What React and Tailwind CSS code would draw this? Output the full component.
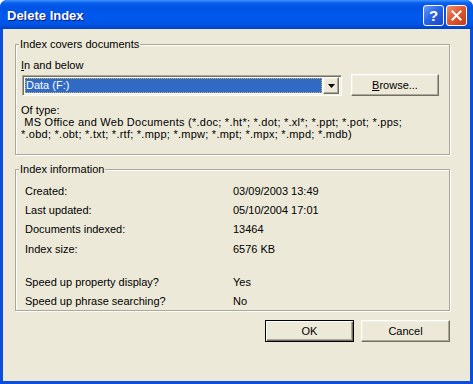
import React from 'react';

// classic etched frame used by both group boxes
const etched = 'border border-[#aca899] shadow-[inset_1px_1px_0_#fff,1px_1px_0_#fff]';
const raised = 'border border-t-white border-l-white border-b-[#716f64] border-r-[#716f64] shadow-[inset_-1px_-1px_0_#aca899,inset_1px_1px_0_#f1efe2]';

function GroupBox({ title, className, children }) {
  return (
    <div className={`relative ${etched} ${className}`}>
      <span className="absolute -top-[7px] left-[3px] bg-[#ece9d8] px-px leading-[13px]">{title}</span>
      {children}
    </div>
  );
}

function InfoRow({ label, value, className = '' }) {
  return (
    <div className={`flex leading-[13px] ${className}`}>
      <span className="w-[208px]">{label}</span>
      <span>{value}</span>
    </div>
  );
}

function TitleButton({ kind }) {
  if (kind === 'help') {
    return (
      <div className="w-[21px] h-[21px] rounded-[3px] border border-white bg-[linear-gradient(135deg,#6f9cf8_0%,#2b64e6_45%,#1747c9_100%)] flex items-center justify-center">
        <span className="text-white font-bold text-[15px] leading-none font-['Liberation_Sans',sans-serif]">?</span>
      </div>
    );
  }
  return (
    <div className="w-[21px] h-[21px] rounded-[3px] border border-white bg-[linear-gradient(135deg,#f0916f_0%,#e05a33_45%,#c23d18_100%)] flex items-center justify-center">
      <svg width="11" height="11" viewBox="0 0 11 11">
        <path d="M1.5 1.5 L9.5 9.5 M9.5 1.5 L1.5 9.5" stroke="#fff" strokeWidth="2" strokeLinecap="square" />
      </svg>
    </div>
  );
}

export default function App() {
  return (
    <div className="w-[473px] h-[384px] flex flex-col rounded-t-[7px] overflow-hidden bg-[#0a4ee0] font-['Liberation_Sans',Arial,sans-serif] text-[11px] text-black">
      {/* Title bar */}
      <div className="h-[29px] shrink-0 flex items-start pl-[7px] pr-[6px] bg-[linear-gradient(to_bottom,#3d95ff_0%,#0a5ff0_10%,#0054e3_25%,#0058ee_55%,#0055e5_85%,#0041c8_100%)]">
        <span className="mt-[8px] leading-[15px] text-[13px] font-bold text-white [text-shadow:1px_1px_0_#0a1883]">Delete Index</span>
        <div className="ml-auto mt-[5px] flex gap-[2px]">
          <TitleButton kind="help" />
          <TitleButton kind="close" />
        </div>
      </div>

      {/* Client area */}
      <div className="flex-1 px-[3px] pb-[3px] flex">
        <div className="flex-1 bg-[#ece9d8] pl-[12px] pr-[20px] pt-[15px] flex flex-col">
          <GroupBox title="Index covers documents" className="h-[111px] pt-[14px] pl-[5px]">
            <div className="leading-[13px]"><span className="underline">I</span>n and below</div>
            <div className="mt-[2px] flex items-start">
              <div className="mt-px ml-px w-[320px] h-[21px] bg-white border border-t-[#aca899] border-l-[#aca899] border-b-white border-r-white shadow-[inset_1px_1px_0_#716f64,inset_-1px_-1px_0_#f1efe2] flex items-center pl-[2px] pr-[2px]">
                <div className="flex-1 h-[15px] bg-[#316ac5] outline outline-1 outline-dotted outline-[#c9b35a] -outline-offset-1 text-white leading-[15px] pl-[1px]">Data (F:)</div>
                <div className={`ml-px w-[16px] h-[17px] bg-[#ece9d8] ${raised} flex items-center justify-center`}>
                  <svg width="7" height="4" viewBox="0 0 7 4"><path d="M0 0 H7 L3.5 4 Z" fill="#000" /></svg>
                </div>
              </div>
              <button className={`ml-[9px] w-[88px] h-[22px] bg-[#ece9d8] ${raised} leading-[13px]`}>
                <span className="underline">B</span>rowse...
              </button>
            </div>
            <div className="mt-[8px] leading-[12px]">Of type:</div>
            <div className="leading-[12px] whitespace-nowrap tracking-[0.25px]">
              &nbsp;MS Office and Web Documents (*.doc; *.ht*; *.dot; *.xl*; *.ppt; *.pot; *.pps;
              <br />
              *.obd; *.obt; *.txt; *.rtf; *.mpp; *.mpw; *.mpt; *.mpx; *.mpd; *.mdb)
            </div>
          </GroupBox>

          <GroupBox title="Index information" className="mt-[14px] h-[142px] pt-[15px] pl-[9px]">
            <InfoRow label="Created:" value="03/09/2003 13:49" />
            <InfoRow label="Last updated:" value="05/10/2004 17:01" className="mt-[6px]" />
            <InfoRow label="Documents indexed:" value="13464" className="mt-[6px]" />
            <InfoRow label="Index size:" value="6576 KB" className="mt-[7px]" />
            <InfoRow label="Speed up property display?" value="Yes" className="mt-[20px]" />
            <InfoRow label="Speed up phrase searching?" value="No" className="mt-[6px]" />
          </GroupBox>

          <div className="mt-[9px] flex justify-end gap-[7px]">
            <button className="w-[89px] h-[22px] bg-[#ece9d8] border border-black shadow-[inset_1px_1px_0_#fff,inset_-1px_-1px_0_#716f64,inset_-2px_-2px_0_#aca899] leading-[13px]">OK</button>
            <button className={`w-[89px] h-[22px] bg-[#ece9d8] ${raised} leading-[13px]`}>Cancel</button>
          </div>
        </div>
      </div>
    </div>
  );
}
